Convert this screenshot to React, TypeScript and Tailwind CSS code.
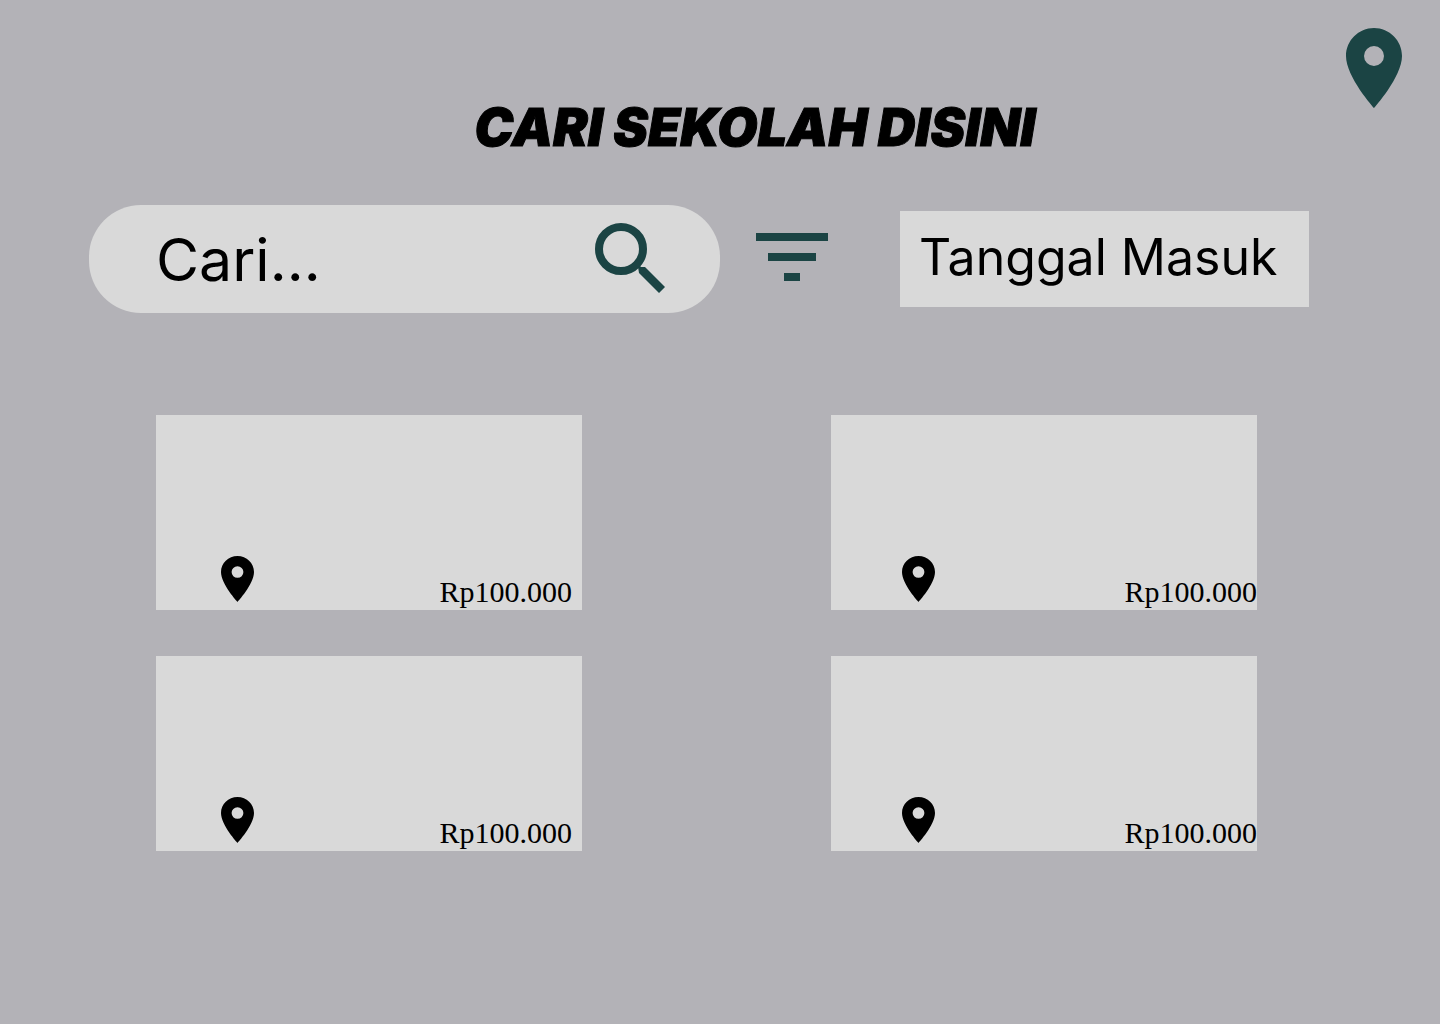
import React from "react";

function Pin({ className }: { className: string }) {
  return (
    <svg viewBox="5 2 14 20" preserveAspectRatio="none" className={className} fill="currentColor" aria-hidden="true">
      <path d="M12 2C8.13 2 5 5.13 5 9c0 5.25 7 13 7 13s7-7.75 7-13c0-3.87-3.13-7-7-7zm0 9.500a2.500 2.500 0 0 1 0-5 2.500 2.500 0 0 1 0 5z" />
    </svg>
  );
}

const schools = [
  { id: 1, price: "Rp100.000", right: false },
  { id: 2, price: "Rp100.000", right: true },
  { id: 3, price: "Rp100.000", right: false },
  { id: 4, price: "Rp100.000", right: true },
];

export default function App() {
  return (
    <div className="flex min-h-screen flex-col bg-[#b3b2b7] font-['Inter',sans-serif] text-black">
      <header className="flex justify-end pt-7 pr-[38px]">
        <button type="button" aria-label="Lokasi" className="text-[#1b4444]">
          <Pin className="h-20 w-14" />
        </button>
      </header>
      <main>
        <h1 className="-mt-4 pl-[70px] text-center text-[52px] leading-[72px] font-black italic [-webkit-text-stroke:1px_black]">
          CARI SEKOLAH DISINI
        </h1>
        <div className="mt-[41px] flex items-center pr-[131px] pl-[89px]">
          <form role="search" className="flex h-[108px] min-w-0 flex-1 items-center rounded-[52px] bg-[#d9d9d9] pr-[55px] pl-[67px]">
            <input
              type="text"
              aria-label="Cari sekolah"
              placeholder="Cari..."
              className="min-w-0 flex-1 bg-transparent pt-0.5 text-[59px] leading-[72px] outline-none placeholder:text-black placeholder:opacity-100"
            />
            <button type="button" aria-label="Cari" className="mb-0.5 shrink-0 text-[#1b4444]">
              <svg viewBox="0 0 70 70" className="size-[70px]" aria-hidden="true">
                <circle cx="26" cy="26" r="22" fill="none" stroke="currentColor" strokeWidth="8" />
                <path d="M43 44l2-1 1 1h4L70 64 64 70 44 50z" fill="currentColor" />
              </svg>
            </button>
          </form>
          <button type="button" aria-label="Filter" className="mb-1 ml-9 shrink-0 text-[#1b4444]">
            <svg viewBox="0 0 72 48" className="h-12 w-[72px]" fill="currentColor" aria-hidden="true">
              <path d="M0 0h72v8H0zM12 20h48v8H12zM28 40h16v8H28z" />
            </svg>
          </button>
          <button type="button" className="ml-[72px] h-24 w-[409px] shrink-0 bg-[#d9d9d9] pb-1 pl-[19px] text-left text-[50px] leading-[60px] whitespace-nowrap">
            Tanggal Masuk
          </button>
        </div>
        <ul className="mt-[102px] flex flex-wrap justify-between gap-y-[46px] pr-[183px] pl-[156px]">
          {schools.map((s) => (
            <li
              key={s.id}
              className={
                s.right
                  ? "flex h-[195px] w-[426px] items-end justify-between bg-[#d9d9d9] pl-[71px]"
                  : "flex h-[195px] w-[426px] items-end justify-between bg-[#d9d9d9] pr-2.5 pl-[65px]"
              }
            >
              <Pin className="mb-2 h-[46px] w-[33px]" />
              <span className="font-['Liberation_Serif',serif] text-[30px] leading-9">{s.price}</span>
            </li>
          ))}
        </ul>
      </main>
    </div>
  );
}
